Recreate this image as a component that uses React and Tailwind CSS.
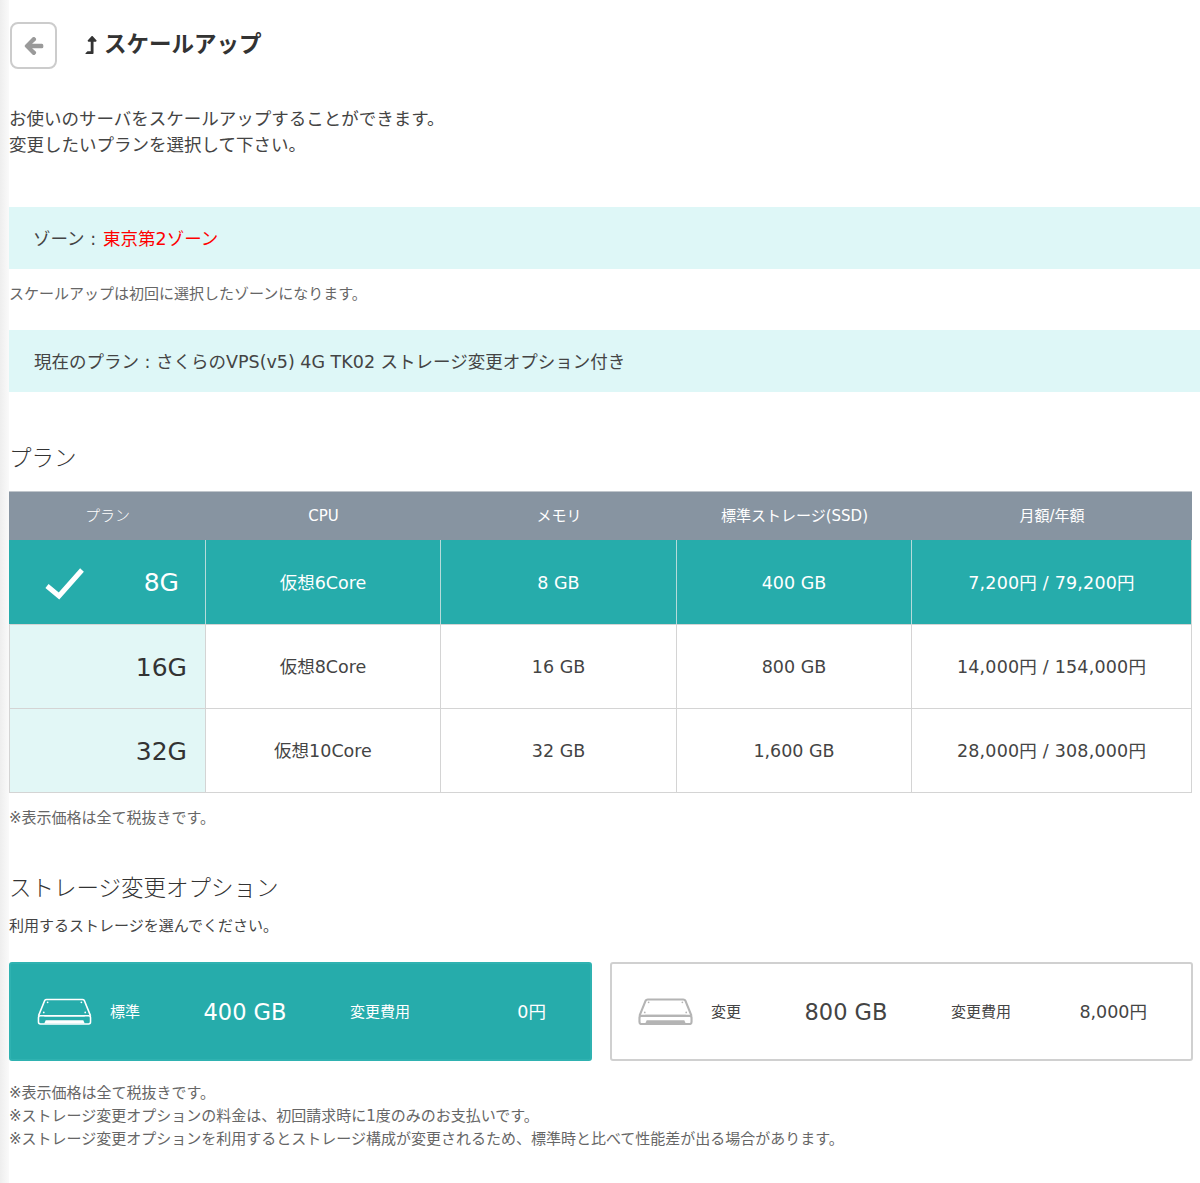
import { FaArrowLeft, FaLevelUpAlt } from 'react-icons/fa';

const PLANS = [
  { name: '8G', cpu: '仮想6Core', memory: '8 GB', storage: '400 GB', price: '7,200円 / 79,200円', selected: true },
  { name: '16G', cpu: '仮想8Core', memory: '16 GB', storage: '800 GB', price: '14,000円 / 154,000円' },
  { name: '32G', cpu: '仮想10Core', memory: '32 GB', storage: '1,600 GB', price: '28,000円 / 308,000円' },
];

function DiskIcon({ className, weight }) {
  return (
    <svg viewBox="0 0 56 28" className={className} fill="none" stroke="currentColor" strokeWidth={weight}>
      <path d="M1 18.500 7.500 2.500Q8 1.500 9.500 1.500h37q1.500 0 2 1L55 18.500" />
      <rect x="1" y="18.500" width="54" height="8.500" rx="2" />
      <path d="M7 18.500h42" />
      <path d="M7 26.500l1.500-3.500h39l1.500 3.500z" fill="currentColor" stroke="none" />
      <circle cx="10.500" cy="4.500" r="0.900" fill="currentColor" stroke="none" />
      <circle cx="45.500" cy="4.500" r="0.900" fill="currentColor" stroke="none" />
      <circle cx="6.500" cy="15" r="0.900" fill="currentColor" stroke="none" />
      <circle cx="49.500" cy="15" r="0.900" fill="currentColor" stroke="none" />
    </svg>
  );
}

function StorageCard({ selected, label, size, price }) {
  return (
    <div
      className={`flex h-[99px] w-[583px] items-center rounded-[3px] border-2 pt-[2px] ${
        selected ? 'border-[#2fb2b1] bg-[#26acab] text-white' : 'border-[#d0d0d0] bg-white text-[#444]'
      }`}
    >
      <div className={`-mt-[2px] ml-[26px] w-[56px] shrink-0 ${selected ? 'text-white' : 'text-[#b4b4b4]'}`}>
        <DiskIcon className="h-[27px] w-[55px]" weight={selected ? 1.6 : 2.2} />
      </div>
      <div className="ml-[17px] w-[60px] shrink-0 text-[15px]">{label}</div>
      <div className="w-[150px] shrink-0 text-center text-[22.500px]">{size}</div>
      <div className="ml-[30px] w-[60px] shrink-0 text-[15px]">変更費用</div>
      <div className="mr-[44px] ml-auto text-[17.500px]">{price}</div>
    </div>
  );
}

export default function App() {
  const cellBorder = (plan) => (plan.selected ? 'border-[#b5dbda]' : 'border-[#d4d4d4]');

  return (
    <div
      className="flex min-h-[1183px] bg-white text-[#444]"
      style={{ fontFamily: '"DejaVu Sans", "Noto Sans CJK JP", sans-serif' }}
    >
      <div className="w-[9px] shrink-0 bg-gradient-to-r from-[#eeeeee] to-[#fafafa]" />
      <div className="min-w-0 flex-1">
        <div className="flex items-center pt-[22px]">
          <div className="ml-[1px] flex h-[47px] w-[47px] items-center justify-center rounded-[8px] border-2 border-[#cccccc]">
            <FaArrowLeft className="h-[20px] w-[20px] text-[#9a9a9a]" stroke="currentColor" strokeWidth={30} />
          </div>
          <h1 className="-mt-[2px] ml-[27px] flex items-center text-[22.500px] leading-none font-bold text-[#333]">
            <FaLevelUpAlt className="mr-[6px] h-[18px] w-[14px]" />
            スケールアップ
          </h1>
        </div>

        <p className="mt-[37px] text-[17.500px] leading-[26px]">
          お使いのサーバをスケールアップすることができます。
          <br />
          変更したいプランを選択して下さい。
        </p>

        <div className="mt-[49px] flex h-[62px] items-center bg-[#def7f7] pt-[2px] pl-[24px] text-[17.500px]">
          ゾーン : <span className="ml-[7px] text-[#ff0000]">東京第2ゾーン</span>
        </div>
        <p className="mt-[15px] text-[15px] leading-[20px] text-[#666]">
          スケールアップは初回に選択したゾーンになります。
        </p>

        <div className="mt-[26px] flex h-[62px] items-center bg-[#def7f7] pt-[2px] pl-[25px] text-[17.500px]">
          現在のプラン : さくらのVPS(v5) 4G TK02 ストレージ変更オプション付き
        </div>

        <h2 className="mt-[49px] text-[22.500px] leading-[34px] font-light text-[#333]">プラン</h2>

        <div className="mt-[16px] w-[1183px]">
          <div className="grid h-[49px] grid-cols-[197px_235px_236px_235px_280px] items-center border-t border-[#c0c6cc] bg-[#8794a1] text-center text-[15px] text-white">
            <div className="font-light">プラン</div>
            <div>CPU</div>
            <div>メモリ</div>
            <div>標準ストレージ(SSD)</div>
            <div>月額/年額</div>
          </div>
          {PLANS.map((plan) => (
            <div
              key={plan.name}
              className={`grid grid-cols-[197px_235px_236px_235px_280px] border-b border-[#d4d4d4] text-center text-[17.500px] ${
                plan.selected ? 'h-[85px] bg-[#26acab] text-white' : 'h-[84px] bg-white text-[#444]'
              }`}
            >
              <div
                className={`flex items-center border-r border-l pt-[2px] ${
                  plan.selected ? 'border-r-[#b5dbda] border-l-[#26acab]' : 'border-[#d4d4d4] bg-[#e2f7f6]'
                }`}
              >
                {plan.selected && (
                  <svg viewBox="0 0 40 33" className="ml-[35px] h-[33px] w-[40px] shrink-0" fill="none" stroke="white" strokeWidth="5">
                    <path d="M2 19 14 29 37 3" />
                  </svg>
                )}
                <span className={`ml-auto text-[25px] ${plan.selected ? 'mr-[26px]' : 'mr-[18px] text-[#333]'}`}>
                  {plan.name}
                </span>
              </div>
              <div className={`flex items-center justify-center border-r pt-[2px] ${cellBorder(plan)}`}>{plan.cpu}</div>
              <div className={`flex items-center justify-center border-r pt-[2px] ${cellBorder(plan)}`}>{plan.memory}</div>
              <div className={`flex items-center justify-center border-r pt-[2px] ${cellBorder(plan)}`}>{plan.storage}</div>
              <div className="flex items-center justify-center border-r border-[#d4d4d4] pt-[2px] tracking-[0.200px]">
                {plan.price}
              </div>
            </div>
          ))}
        </div>

        <p className="mt-[15px] text-[15px] leading-[20px] text-[#666]">※表示価格は全て税抜きです。</p>

        <h2 className="mt-[43px] text-[22.500px] leading-[34px] font-light text-[#333]">ストレージ変更オプション</h2>
        <p className="mt-[11px] text-[15px] leading-[20px]">利用するストレージを選んでください。</p>

        <div className="mt-[26px] flex gap-[18px]">
          <StorageCard selected label="標準" size="400 GB" price="0円" />
          <StorageCard label="変更" size="800 GB" price="8,000円" />
        </div>

        <div className="mt-[21px] text-[15px] leading-[23px] text-[#666]">
          <p>※表示価格は全て税抜きです。</p>
          <p>※ストレージ変更オプションの料金は、初回請求時に1度のみのお支払いです。</p>
          <p>※ストレージ変更オプションを利用するとストレージ構成が変更されるため、標準時と比べて性能差が出る場合があります。</p>
        </div>
      </div>
    </div>
  );
}
